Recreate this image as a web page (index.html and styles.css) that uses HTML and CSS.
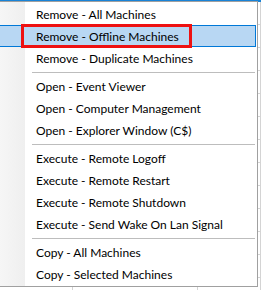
FILE: index.html
```html
<!DOCTYPE html>
<html>
<head>
<meta charset="utf-8">
<link rel="stylesheet" href="styles.css">
</head>
<body>
<div class="grid">
  <div class="grid-head"></div>
  <div class="grid-row"><span></span><span></span><span></span></div>
  <div class="grid-row"><span></span><span></span><span></span></div>
  <div class="grid-row"><span></span><span></span><span></span></div>
  <div class="grid-row"><span></span><span></span><span></span></div>
  <div class="grid-row"><span></span><span></span><span></span></div>
  <div class="grid-row"><span></span><span></span><span></span></div>
  <div class="grid-row"><span></span><span></span><span></span></div>
  <div class="grid-row"><span></span><span></span><span></span></div>
  <div class="grid-row"><span></span><span></span><span></span></div>
  <div class="grid-row"><span></span><span></span><span></span></div>
  <div class="grid-row"><span></span><span></span><span></span></div>
  <div class="grid-row"><span></span><span></span><span></span></div>
  <div class="grid-row"><span></span><span></span><span></span></div>
</div>

<div class="menu">
  <div class="item">Remove - All Machines</div>
  <div class="item active">Remove - Offline Machines</div>
  <div class="item">Remove - Duplicate Machines</div>
  <div class="sep"></div>
  <div class="item">Open - Event Viewer</div>
  <div class="item">Open - Computer Management</div>
  <div class="item">Open - Explorer Window (C$)</div>
  <div class="sep"></div>
  <div class="item">Execute - Remote Logoff</div>
  <div class="item">Execute - Remote Restart</div>
  <div class="item">Execute - Remote Shutdown</div>
  <div class="item">Execute - Send Wake On Lan Signal</div>
  <div class="sep"></div>
  <div class="item">Copy - All Machines</div>
  <div class="item">Copy - Selected Machines</div>
</div>
<div class="callout"></div>
</body>
</html>
```

FILE: styles.css
```css
html, body {
  margin: 0;
  padding: 0;
  background: #ffffff;
  overflow: hidden;
  width: 261px;
  height: 290px;
}

.grid {
  display: flex;
  flex-direction: column;
  width: 261px;
}

.grid-head {
  height: 2px;
  background: #1883d7;
}

.grid-row {
  display: grid;
  grid-template-columns: 73px 125px 1fr;
  height: 22px;
  border-bottom: 1px solid #d4d4d4;
}

.grid-row span {
  border-right: 1px solid #d4d4d4;
}

.menu {
  position: absolute;
  left: -2px;
  top: 1px;
  width: 260px;
  box-sizing: border-box;
  border: 1px solid #a0a0a0;
  padding: 1px 1px 1px 0;
  background: linear-gradient(to right, #f6f6f6 0px, #efefef 26px, #ffffff 26px, #ffffff 100%);
  font-family: "Lato", "Open Sans", sans-serif;
  font-size: 12px;
  color: #000000;
  display: flex;
  flex-direction: column;
}

.item {
  height: 22px;
  line-height: 21px;
  padding-left: 36px;
  box-sizing: border-box;
  white-space: nowrap;
  border: 1px solid transparent;
}

.item.active {
  background: #b8d7f3;
  border-color: #0078d7;
}

.sep {
  height: 6px;
  display: flex;
  align-items: center;
  padding-left: 33px;
}

.sep::after {
  content: "";
  flex: 1;
  height: 1px;
  background: #bdbdbd;
  margin-right: 1px;
}

.callout {
  position: absolute;
  left: 21px;
  top: 24px;
  width: 171px;
  height: 24px;
  box-sizing: border-box;
  border: 3px solid #ee1111;
}
```
